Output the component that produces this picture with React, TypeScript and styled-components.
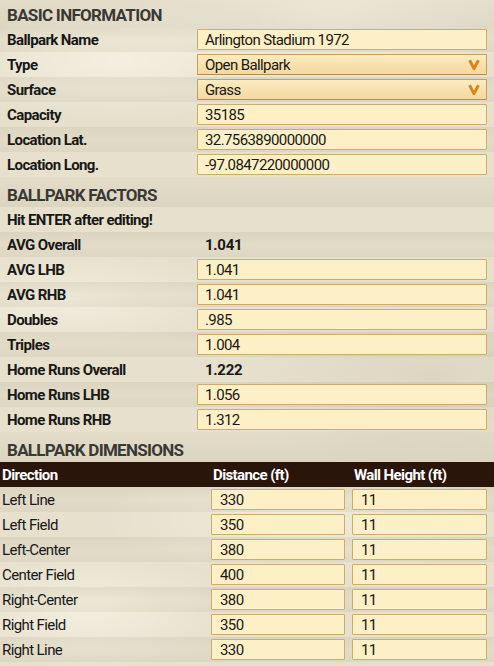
import React from "react";
import styled, { createGlobalStyle } from "styled-components";

const GlobalStyle = createGlobalStyle`
  html, body {
    margin: 0;
    padding: 0;
  }
  body {
    width: 494px;
    height: 666px;
    overflow: hidden;
    font-family: Roboto, "Liberation Sans", sans-serif;
    color: #191816;
    background-color: #e6e0cd;
    background-image:
      radial-gradient(ellipse 180px 60px at 120px 60px, rgba(255, 252, 240, 0.55), transparent),
      radial-gradient(ellipse 220px 70px at 330px 20px, rgba(255, 252, 240, 0.5), transparent),
      radial-gradient(ellipse 160px 50px at 70px 300px, rgba(255, 252, 240, 0.45), transparent),
      radial-gradient(ellipse 200px 60px at 300px 520px, rgba(255, 252, 240, 0.4), transparent),
      radial-gradient(ellipse 150px 60px at 90px 610px, rgba(255, 252, 240, 0.5), transparent),
      radial-gradient(ellipse 200px 90px at 430px 380px, rgba(150, 140, 110, 0.12), transparent);
  }
`;

const Page = styled.div`
  display: flex;
  flex-direction: column;
`;

const SectionHeader = styled.div<{ $first?: boolean }>`
  height: ${(p) => (p.$first ? 27 : 30)}px;
  box-sizing: border-box;
  padding: ${(p) => (p.$first ? 3 : 6)}px 7px 0;
  display: flex;
  align-items: center;
  font-size: 17px;
  font-weight: 700;
  letter-spacing: -0.7px;
  color: #3a3834;
  background: linear-gradient(
    to bottom,
    rgba(160, 150, 120, 0.06),
    rgba(150, 140, 110, 0.13)
  );
`;

const Group = styled.div`
  display: flex;
  flex-direction: column;
  & > div:nth-child(odd) {
    background: linear-gradient(
      to bottom,
      rgba(140, 130, 100, 0.12),
      rgba(140, 130, 100, 0.05) 50%,
      rgba(140, 130, 100, 0.1)
    );
  }
`;

const Row = styled.div`
  height: 25px;
  display: grid;
  grid-template-columns: 197px 290px;
  align-items: center;
`;

const Label = styled.div`
  padding-left: 7px;
  font-size: 15px;
  font-weight: 700;
  letter-spacing: -0.6px;
  white-space: nowrap;
`;

const Note = styled(Label)`
  grid-column: 1 / span 2;
`;

const StaticValue = styled.div`
  padding-left: 8px;
  font-size: 15px;
  font-weight: 700;
  letter-spacing: -0.3px;
`;

const TextField = styled.input`
  box-sizing: border-box;
  width: 100%;
  height: 21px;
  margin: 0;
  padding: 0 7px;
  border: 1px solid #cdac6c;
  border-radius: 1px;
  background: #fdf0c6;
  font-family: Roboto, "Liberation Sans", sans-serif;
  font-size: 15px;
  letter-spacing: -0.6px;
  color: #191816;
  outline: none;
`;

const SelectBox = styled.div`
  box-sizing: border-box;
  height: 21px;
  padding: 0 7px;
  display: flex;
  align-items: center;
  justify-content: space-between;
  border: 1px solid #c99f58;
  border-bottom-color: #b88d48;
  border-radius: 1px;
  background: linear-gradient(to bottom, #fcebc0, #f5d89e);
  font-size: 15px;
  letter-spacing: -0.6px;
`;

const Chevron = styled.svg`
  width: 12px;
  height: 11px;
  flex: none;
  margin-right: -1px;
`;

const TableHead = styled.div`
  height: 25px;
  display: grid;
  grid-template-columns: 211px 141px 142px;
  align-items: center;
  background: #2a150b;
  color: #ffffff;
  font-size: 15px;
  font-weight: 700;
  letter-spacing: -0.6px;
`;

const HeadCell = styled.div<{ $pad: number }>`
  padding-left: ${(p) => p.$pad}px;
`;

const DimRow = styled.div`
  height: 25px;
  display: grid;
  grid-template-columns: 204px 134px 135px;
  column-gap: 7px;
  align-items: center;
`;

const DimLabel = styled.div`
  padding-left: 2px;
  font-size: 15px;
  letter-spacing: -0.6px;
`;

const DimField = styled(TextField)`
  padding-left: 8px;
`;

function Select({ value }: { value: string }) {
  return (
    <SelectBox>
      <span>{value}</span>
      <Chevron viewBox="0 0 12 11">
        <polyline
          points="1.6,1.2 6,9.6 10.4,1.2"
          fill="none"
          stroke="#d4871f"
          strokeWidth="3"
          strokeLinejoin="miter"
        />
      </Chevron>
    </SelectBox>
  );
}

const factors: { label: string; value: string; editable: boolean }[] = [
  { label: "AVG Overall", value: "1.041", editable: false },
  { label: "AVG LHB", value: "1.041", editable: true },
  { label: "AVG RHB", value: "1.041", editable: true },
  { label: "Doubles", value: ".985", editable: true },
  { label: "Triples", value: "1.004", editable: true },
  { label: "Home Runs Overall", value: "1.222", editable: false },
  { label: "Home Runs LHB", value: "1.056", editable: true },
  { label: "Home Runs RHB", value: "1.312", editable: true },
];

const dimensions = [
  { dir: "Left Line", dist: "330", wall: "11" },
  { dir: "Left Field", dist: "350", wall: "11" },
  { dir: "Left-Center", dist: "380", wall: "11" },
  { dir: "Center Field", dist: "400", wall: "11" },
  { dir: "Right-Center", dist: "380", wall: "11" },
  { dir: "Right Field", dist: "350", wall: "11" },
  { dir: "Right Line", dist: "330", wall: "11" },
];

export default function App() {
  return (
    <>
      <GlobalStyle />
      <Page>
        <SectionHeader $first>BASIC INFORMATION</SectionHeader>
        <Group>
          <Row>
            <Label>Ballpark Name</Label>
            <TextField defaultValue="Arlington Stadium 1972" />
          </Row>
          <Row>
            <Label>Type</Label>
            <Select value="Open Ballpark" />
          </Row>
          <Row>
            <Label>Surface</Label>
            <Select value="Grass" />
          </Row>
          <Row>
            <Label>Capacity</Label>
            <TextField defaultValue="35185" />
          </Row>
          <Row>
            <Label>Location Lat.</Label>
            <TextField defaultValue="32.7563890000000" />
          </Row>
          <Row>
            <Label>Location Long.</Label>
            <TextField defaultValue="-97.0847220000000" />
          </Row>
        </Group>

        <SectionHeader>BALLPARK FACTORS</SectionHeader>
        <Row>
          <Note>Hit ENTER after editing!</Note>
        </Row>
        <Group>
          {factors.map((f) => (
            <Row key={f.label}>
              <Label>{f.label}</Label>
              {f.editable ? (
                <TextField defaultValue={f.value} />
              ) : (
                <StaticValue>{f.value}</StaticValue>
              )}
            </Row>
          ))}
        </Group>

        <SectionHeader>BALLPARK DIMENSIONS</SectionHeader>
        <TableHead>
          <HeadCell $pad={2}>Direction</HeadCell>
          <HeadCell $pad={2}>Distance (ft)</HeadCell>
          <HeadCell $pad={2}>Wall Height (ft)</HeadCell>
        </TableHead>
        <Group>
          {dimensions.map((d) => (
            <DimRow key={d.dir}>
              <DimLabel>{d.dir}</DimLabel>
              <DimField defaultValue={d.dist} />
              <DimField defaultValue={d.wall} />
            </DimRow>
          ))}
        </Group>
      </Page>
    </>
  );
}
